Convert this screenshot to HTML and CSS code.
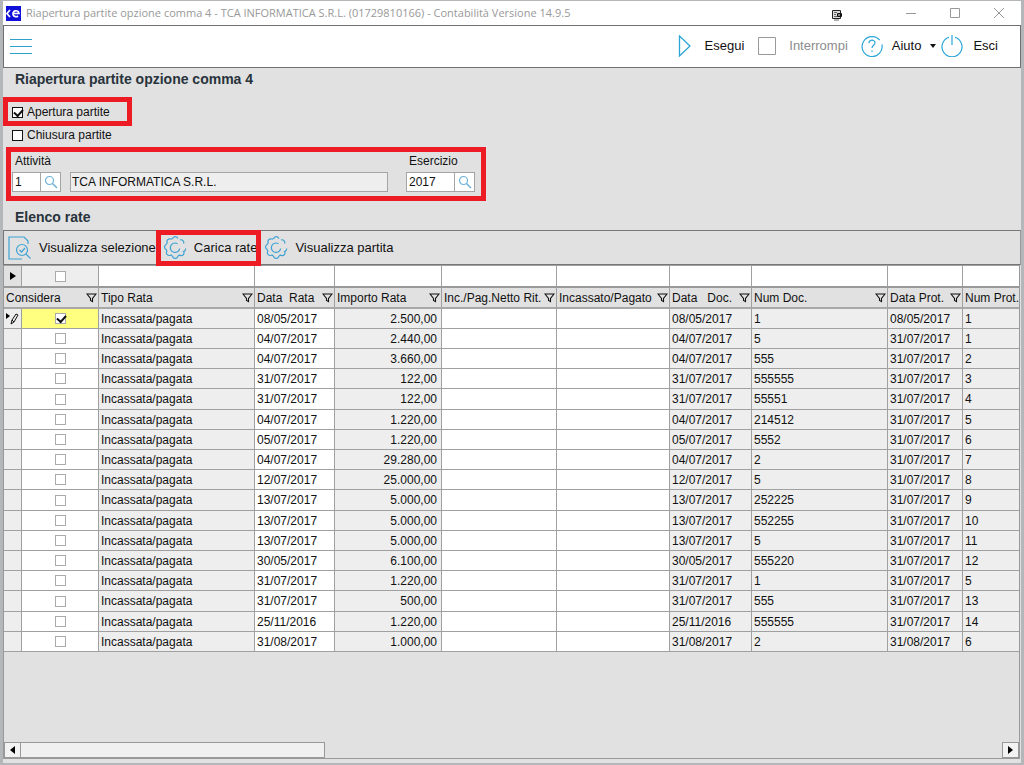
FILE: index.html
```html
<!DOCTYPE html>
<html lang="it">
<head>
<meta charset="utf-8">
<meta name="viewport" content="width=device-width, initial-scale=1">
<title>Riapertura partite opzione comma 4</title>
<link rel="stylesheet" href="styles.css">
</head>
<body>
<svg class="symbols" aria-hidden="true">
  <symbol id="funnel" viewBox="0 0 11 10"><path d="M1 1h9L6.500 5.500v3L4.500 7.500v-2z" fill="none" stroke="#111" stroke-width="1.100"/></symbol>
  <symbol id="lens" viewBox="0 0 14 14"><circle cx="5.500" cy="5.500" r="4" fill="none" stroke="#6fb3d9" stroke-width="1.200"/><path d="M8.500 8.500L13 13" stroke="#6fb3d9" stroke-width="1.500"/></symbol>
  <symbol id="gear" viewBox="0 0 24 24"><g fill="none" stroke="#3fa3d4" stroke-width="1.200"><path d="M22.500 12.500A2.500 2.500 0 0 1 20.500 15.500a2.600 2.600 0 0 1-3.500 3.700 2.300 2.300 0 0 0-2.200 1.300 2.700 2.700 0 0 1-5.200 0 2.300 2.300 0 0 0-2.300-1.300 2.700 2.700 0 0 1-3.600-3.600 2.300 2.300 0 0 0-.9-2.300 2.700 2.700 0 0 1 0-4.600A2.300 2.300 0 0 0 4 6a2.700 2.700 0 0 1 3.600-3 2.300 2.300 0 0 0 2.300-.8 2.700 2.700 0 0 1 5 .4M17 4a2.700 2.700 0 0 1 3.500 3.600"/><path d="M14.500 7.700A4.700 4.700 0 1 0 16.700 12.500"/></g></symbol>
</svg>
<main class="window">
  <header class="titlebar">
    <svg class="logo" viewBox="0 0 15 15" aria-hidden="true"><rect width="15" height="15" fill="#1010d8"/><path d="M4 4L1 7.500L4 11M7 7.500h6A3 3 0 1 0 12 10" fill="none" stroke="#fff" stroke-width="1.700"/></svg>
    <span class="caption">Riapertura partite opzione comma 4 - TCA INFORMATICA S.R.L. (01729810166) - Contabilità Versione 14.9.5</span>
    <svg class="pin" viewBox="0 0 12 12" aria-hidden="true"><path d="M1.500 1.500h8v8h-8z" fill="#ddd" stroke="#222"/><path d="M3 3.500h3M3 5.500h2M3 7.500h3M3 11h5" stroke="#666"/><rect x="6" y="4" width="5" height="4" rx="1" fill="#111"/><path d="M7 6h2" stroke="#fff"/></svg>
    <button class="winbtn" aria-label="Riduci"><svg viewBox="0 0 12 12"><path d="M1 6.500h10"/></svg></button>
    <button class="winbtn" aria-label="Ingrandisci"><svg viewBox="0 0 12 12"><path d="M1.500 1.500h9v9h-9z"/></svg></button>
    <button class="winbtn" aria-label="Chiudi"><svg viewBox="0 0 12 12"><path d="M1 1l10 10M11 1L1 11"/></svg></button>
  </header>
  <nav class="toolbar">
    <button class="tool menu" aria-label="Menu"><svg viewBox="0 0 22 16"><path d="M0 1.500h22M0 8.500h22M0 15.500h22" stroke="#2f9fcb"/></svg></button>
    <button class="tool run"><svg viewBox="0 0 14 22"><path d="M1.500 1v20L12 11z" fill="none" stroke="#2ba6d8" stroke-width="1.300"/></svg>Esegui</button>
    <button class="tool stop" disabled><svg viewBox="0 0 18 18"><path d="M.5.5h17v17H.5z" fill="none" stroke="#999"/></svg>Interrompi</button>
    <button class="tool help"><svg viewBox="0 0 22 22"><path d="M18.800 5.200A10 10 0 1 0 20.900 9.500M8 8.300C8 4 14.200 4.300 14 8c-.2 2.200-3 2.300-3 5M11 15.500v1.500" fill="none" stroke="#2ba6d8" stroke-width="1.200"/></svg>Aiuto<svg class="caret" viewBox="0 0 6 4"><path d="M0 0h6L3 4z" fill="#111"/></svg></button>
    <button class="tool exit"><svg viewBox="0 0 22 22"><path d="M14 2.200A10 10 0 1 1 8 2.200M11 0v10" fill="none" stroke="#2ba6d8" stroke-width="1.200"/></svg>Esci</button>
  </nav>
  <section class="options">
    <h1>Riapertura partite opzione comma 4</h1>
    <div class="checks">
      <label class="option mark mark-option"><input type="checkbox" class="box" checked>Apertura partite</label>
      <label class="option"><input type="checkbox" class="box">Chiusura partite</label>
    </div>
    <div class="fields mark mark-fields">
      <div class="field">
        <label for="att">Attività</label>
        <div class="entry"><input id="att" class="code" value="1"><button class="search" aria-label="Cerca attività"><svg><use href="#lens"/></svg></button></div>
      </div>
      <input class="company" value="TCA INFORMATICA S.R.L." aria-label="Descrizione attività" readonly>
      <div class="field">
        <label for="ese">Esercizio</label>
        <div class="entry"><input id="ese" class="code year" value="2017"><button class="search" aria-label="Cerca esercizio"><svg><use href="#lens"/></svg></button></div>
      </div>
    </div>
    <h2>Elenco rate</h2>
  </section>
  <div class="actions">
    <button class="tool act"><svg viewBox="0 0 24 24"><g fill="none" stroke="#3fa3d4" stroke-width="1.200"><path d="M20 8V5l-4-4H1v22h13"/><circle cx="14" cy="14" r="5.500"/><path d="M18 18l4.500 4.500M11.500 14l2 2 3.500-4"/></g></svg>Visualizza selezione</button>
    <button class="tool act mark mark-load"><svg><use href="#gear"/></svg>Carica rate</button>
    <button class="tool act"><svg><use href="#gear"/></svg>Visualizza partita</button>
  </div>
  <div class="list">
    <table class="grid">
      <colgroup><col class="c-row"><col class="c-sel"><col class="c-type"><col class="c-date"><col class="c-amt"><col class="c-net"><col class="c-paid"><col class="c-ddoc"><col class="c-ndoc"><col class="c-dprot"><col></colgroup>
      <thead>
        <tr class="filters"><td class="marker"><svg viewBox="0 0 6 8"><path d="M0 0l6 4-6 4z"/></svg></td><td class="tick ro"><input type="checkbox" class="box light" aria-label="Filtra considera"></td><td></td><td></td><td></td><td></td><td></td><td></td><td></td><td></td><td></td></tr>
        <tr class="heads">
          <th colspan="2"><div>Considera<button aria-label="Filtro"><svg><use href="#funnel"/></svg></button></div></th>
          <th><div>Tipo Rata<button aria-label="Filtro"><svg><use href="#funnel"/></svg></button></div></th>
          <th><div>Data&nbsp; Rata<button aria-label="Filtro"><svg><use href="#funnel"/></svg></button></div></th>
          <th><div>Importo Rata<button aria-label="Filtro"><svg><use href="#funnel"/></svg></button></div></th>
          <th><div>Inc./Pag.Netto Rit.<button aria-label="Filtro"><svg><use href="#funnel"/></svg></button></div></th>
          <th><div>Incassato/Pagato<button aria-label="Filtro"><svg><use href="#funnel"/></svg></button></div></th>
          <th><div>Data&nbsp;&nbsp; Doc.<button aria-label="Filtro"><svg><use href="#funnel"/></svg></button></div></th>
          <th><div>Num Doc.<button aria-label="Filtro"><svg><use href="#funnel"/></svg></button></div></th>
          <th><div>Data Prot.<button aria-label="Filtro"><svg><use href="#funnel"/></svg></button></div></th>
          <th><div>Num Prot.</div></th>
        </tr>
      </thead>
      <tbody>
        <tr class="current"><td class="marker"><svg class="pencil" viewBox="0 0 13 12"><path d="M0 0l4 3-4 3z"/><path d="M5 11l1-4 4-6 2 1-4 7zM6 7l2 2" fill="none" stroke="#111"/></svg></td><td class="tick"><input type="checkbox" class="box light" aria-label="Considera" checked></td><td class="ro">Incassata/pagata</td><td>08/05/2017</td><td class="ro num">2.500,00</td><td></td><td></td><td class="ro">08/05/2017</td><td class="ro">1</td><td class="ro">08/05/2017</td><td class="ro">1</td></tr>
        <tr><td class="marker"></td><td class="tick"><input type="checkbox" class="box light" aria-label="Considera"></td><td class="ro">Incassata/pagata</td><td>04/07/2017</td><td class="ro num">2.440,00</td><td></td><td></td><td class="ro">04/07/2017</td><td class="ro">5</td><td class="ro">31/07/2017</td><td class="ro">1</td></tr>
        <tr><td class="marker"></td><td class="tick"><input type="checkbox" class="box light" aria-label="Considera"></td><td class="ro">Incassata/pagata</td><td>04/07/2017</td><td class="ro num">3.660,00</td><td></td><td></td><td class="ro">04/07/2017</td><td class="ro">555</td><td class="ro">31/07/2017</td><td class="ro">2</td></tr>
        <tr><td class="marker"></td><td class="tick"><input type="checkbox" class="box light" aria-label="Considera"></td><td class="ro">Incassata/pagata</td><td>31/07/2017</td><td class="ro num">122,00</td><td></td><td></td><td class="ro">31/07/2017</td><td class="ro">555555</td><td class="ro">31/07/2017</td><td class="ro">3</td></tr>
        <tr><td class="marker"></td><td class="tick"><input type="checkbox" class="box light" aria-label="Considera"></td><td class="ro">Incassata/pagata</td><td>31/07/2017</td><td class="ro num">122,00</td><td></td><td></td><td class="ro">31/07/2017</td><td class="ro">55551</td><td class="ro">31/07/2017</td><td class="ro">4</td></tr>
        <tr><td class="marker"></td><td class="tick"><input type="checkbox" class="box light" aria-label="Considera"></td><td class="ro">Incassata/pagata</td><td>04/07/2017</td><td class="ro num">1.220,00</td><td></td><td></td><td class="ro">04/07/2017</td><td class="ro">214512</td><td class="ro">31/07/2017</td><td class="ro">5</td></tr>
        <tr><td class="marker"></td><td class="tick"><input type="checkbox" class="box light" aria-label="Considera"></td><td class="ro">Incassata/pagata</td><td>05/07/2017</td><td class="ro num">1.220,00</td><td></td><td></td><td class="ro">05/07/2017</td><td class="ro">5552</td><td class="ro">31/07/2017</td><td class="ro">6</td></tr>
        <tr><td class="marker"></td><td class="tick"><input type="checkbox" class="box light" aria-label="Considera"></td><td class="ro">Incassata/pagata</td><td>04/07/2017</td><td class="ro num">29.280,00</td><td></td><td></td><td class="ro">04/07/2017</td><td class="ro">2</td><td class="ro">31/07/2017</td><td class="ro">7</td></tr>
        <tr><td class="marker"></td><td class="tick"><input type="checkbox" class="box light" aria-label="Considera"></td><td class="ro">Incassata/pagata</td><td>12/07/2017</td><td class="ro num">25.000,00</td><td></td><td></td><td class="ro">12/07/2017</td><td class="ro">5</td><td class="ro">31/07/2017</td><td class="ro">8</td></tr>
        <tr><td class="marker"></td><td class="tick"><input type="checkbox" class="box light" aria-label="Considera"></td><td class="ro">Incassata/pagata</td><td>13/07/2017</td><td class="ro num">5.000,00</td><td></td><td></td><td class="ro">13/07/2017</td><td class="ro">252225</td><td class="ro">31/07/2017</td><td class="ro">9</td></tr>
        <tr><td class="marker"></td><td class="tick"><input type="checkbox" class="box light" aria-label="Considera"></td><td class="ro">Incassata/pagata</td><td>13/07/2017</td><td class="ro num">5.000,00</td><td></td><td></td><td class="ro">13/07/2017</td><td class="ro">552255</td><td class="ro">31/07/2017</td><td class="ro">10</td></tr>
        <tr><td class="marker"></td><td class="tick"><input type="checkbox" class="box light" aria-label="Considera"></td><td class="ro">Incassata/pagata</td><td>13/07/2017</td><td class="ro num">5.000,00</td><td></td><td></td><td class="ro">13/07/2017</td><td class="ro">5</td><td class="ro">31/07/2017</td><td class="ro">11</td></tr>
        <tr><td class="marker"></td><td class="tick"><input type="checkbox" class="box light" aria-label="Considera"></td><td class="ro">Incassata/pagata</td><td>30/05/2017</td><td class="ro num">6.100,00</td><td></td><td></td><td class="ro">30/05/2017</td><td class="ro">555220</td><td class="ro">31/07/2017</td><td class="ro">12</td></tr>
        <tr><td class="marker"></td><td class="tick"><input type="checkbox" class="box light" aria-label="Considera"></td><td class="ro">Incassata/pagata</td><td>31/07/2017</td><td class="ro num">1.220,00</td><td></td><td></td><td class="ro">31/07/2017</td><td class="ro">1</td><td class="ro">31/07/2017</td><td class="ro">5</td></tr>
        <tr><td class="marker"></td><td class="tick"><input type="checkbox" class="box light" aria-label="Considera"></td><td class="ro">Incassata/pagata</td><td>31/07/2017</td><td class="ro num">500,00</td><td></td><td></td><td class="ro">31/07/2017</td><td class="ro">555</td><td class="ro">31/07/2017</td><td class="ro">13</td></tr>
        <tr><td class="marker"></td><td class="tick"><input type="checkbox" class="box light" aria-label="Considera"></td><td class="ro">Incassata/pagata</td><td>25/11/2016</td><td class="ro num">1.220,00</td><td></td><td></td><td class="ro">25/11/2016</td><td class="ro">555555</td><td class="ro">31/07/2017</td><td class="ro">14</td></tr>
        <tr><td class="marker"></td><td class="tick"><input type="checkbox" class="box light" aria-label="Considera"></td><td class="ro">Incassata/pagata</td><td>31/08/2017</td><td class="ro num">1.000,00</td><td></td><td></td><td class="ro">31/08/2017</td><td class="ro">2</td><td class="ro">31/08/2017</td><td class="ro">6</td></tr>
      </tbody>
    </table>
    <div class="scroll">
      <button aria-label="Scorri a sinistra"><svg viewBox="0 0 5 8"><path d="M5 0v8L0 4z"/></svg></button>
      <div class="track"><div class="thumb"></div></div>
      <button aria-label="Scorri a destra"><svg viewBox="0 0 5 8"><path d="M0 0v8l5-4z"/></svg></button>
    </div>
  </div>
</main>
</body>
</html>
```

FILE: styles.css
```css
* { box-sizing: border-box; }
body {
  margin: 0;
  min-height: 100vh;
  display: flex;
  padding: 1px 3px 2px;
  background: #b4b6b9;
  font-family: "Liberation Sans", Arial, sans-serif;
  font-size: 12px;
  color: #111;
}
button, input { font: inherit; color: inherit; margin: 0; padding: 0; border: 0; border-radius: 0; background: none; }
.symbols { position: absolute; width: 0; height: 0; }
.window { flex: 1; min-width: 0; display: flex; flex-direction: column; background: #e1e1e1; }

.titlebar { display: flex; align-items: center; height: 24px; padding-left: 3px; background: #fff; color: #999; }
.logo { width: 15px; height: 15px; flex: none; }
.caption { flex: 1; min-width: 0; padding-left: 5px; font-family: "Open Sans", sans-serif; font-size: 11px; line-height: 20px; white-space: nowrap; overflow: hidden; }
.pin { width: 12px; height: 12px; margin: 4px 46px 0 0; }
.winbtn { width: 44px; height: 20px; display: flex; align-items: center; justify-content: center; }
.winbtn svg { width: 12px; height: 12px; fill: none; stroke: #999; }

.toolbar { display: flex; align-items: center; height: 43px; padding: 0 22px 2px 6px; background: #fff; border: 1px solid #707070; }
.tool { display: flex; align-items: center; font-size: 13px; line-height: 16px; white-space: nowrap; }
.tool svg { flex: none; }
.menu { margin-right: auto; }
.menu svg { width: 22px; height: 16px; }
.run { gap: 13px; margin-right: 14px; }
.run svg { width: 14px; height: 22px; }
.stop { gap: 13px; margin-right: 13px; color: #8c8c8c; }
.stop svg { width: 18px; height: 18px; }
.help { gap: 9px; margin-right: 5px; }
.help svg, .exit svg { width: 22px; height: 22px; }
.help .caret { width: 6px; height: 4px; }
.exit { gap: 10px; }

.options { padding: 0 9px; }
h1, h2 { margin: 0 0 0 3px; font-size: 14px; line-height: 22px; color: #28333c; }
.checks { display: flex; flex-direction: column; align-items: flex-start; gap: 3px; padding-top: 12px; }
.option { display: flex; align-items: center; gap: 4px; height: 20px; }
.box { appearance: none; width: 11px; height: 11px; background: #fff; border: 1px solid #111; display: block; }
.box:checked::before { content: ""; display: block; width: 7px; height: 4px; margin: 1px; border: solid #111; border-width: 0 0 2px 2px; transform: rotate(-48deg); }
.light { border-color: #aaa; margin: 0 auto; }

.mark { position: relative; }
.mark::after { content: ""; position: absolute; border: 5px solid #ed1c24; pointer-events: none; }
.mark-option::after { inset: -5px -22px -4px -9px; }
.mark-fields::after { inset: 2px -11px -9px -6px; }
.mark-load::after { inset: -1px -4px -2px -7px; }

.fields { display: flex; align-items: flex-end; width: fit-content; padding-top: 9px; margin-bottom: 14px; }
.field label { display: block; padding-left: 3px; line-height: 14px; margin-bottom: 4px; }
.entry { display: flex; height: 20px; border: 1px solid #a5a5a5; background: #fff; }
.code { width: 27px; padding-left: 2px; }
.year { width: 47px; }
.search { width: 20px; border-left: 1px solid #a5a5a5; display: flex; align-items: center; justify-content: center; }
.search svg { width: 14px; height: 14px; }
.company { width: 318px; height: 20px; margin: 0 18px 0 9px; padding-left: 1px; border: 1px solid #a5a5a5; background: #eee; }

.actions { display: flex; height: 35px; margin-top: 2px; padding-left: 4px; border: 1px solid #777; border-right-color: #999; gap: 7px; }
.act svg { width: 24px; height: 24px; margin-right: 7px; }

.list { flex: 1; display: flex; flex-direction: column; margin: 0 1px 4px 0; border: 1px solid #999; border-top: 0; overflow: hidden; }
.grid { width: 100%; table-layout: fixed; border-collapse: separate; border-spacing: 0; }
.c-row { width: 18px; }
.c-sel { width: 77px; }
.c-type { width: 156px; }
.c-date { width: 80px; }
.c-amt { width: 107px; }
.c-net { width: 115px; }
.c-paid { width: 113px; }
.c-ddoc { width: 82px; }
.c-ndoc { width: 136px; }
.c-dprot { width: 75px; }
.grid td, .grid th { height: 20px; padding: 0 4px 0 2px; border: solid #a0a0a0; border-width: 0 1px 1px 0; background: #fff; line-height: 16px; font-weight: normal; text-align: left; white-space: nowrap; overflow: hidden; }
.grid tbody tr:nth-child(5n) td { height: 21px; }
.grid tr > :last-child { border-right: 0; }
.grid .ro, .grid .marker { background: #eee; }
.grid .num { text-align: right; }
.grid .tick, .grid .marker { padding: 0; }
.grid .filters td { height: 23px; border-top: 1px solid #a0a0a0; border-bottom: 2px solid #999; }
.grid .filters .marker { background: #e1e1e1; }
.grid .heads th { height: 21px; padding-right: 1px; background: #e1e1e1; border-bottom: 2px solid #a8a8a8; }
.grid .heads th:last-child { padding-right: 0; }
.heads div { display: flex; justify-content: space-between; align-items: center; }
.heads button, .heads button svg { display: block; width: 11px; height: 10px; flex: none; }
.marker svg { display: block; width: 6px; height: 8px; margin: 0 auto; }
.marker .pencil { width: 13px; height: 12px; }
.grid .current .tick { background: #ffff80; }

.scroll { display: flex; height: 16px; margin-top: auto; }
.scroll button { width: 17px; border: 1px solid #999; background: #f2f2f2; display: flex; align-items: center; justify-content: center; }
.scroll svg { width: 5px; height: 8px; }
.track { flex: 1; }
.thumb { width: 31%; height: 16px; border: 1px solid #999; border-left: 0; background: #f0f0f0; }
```
